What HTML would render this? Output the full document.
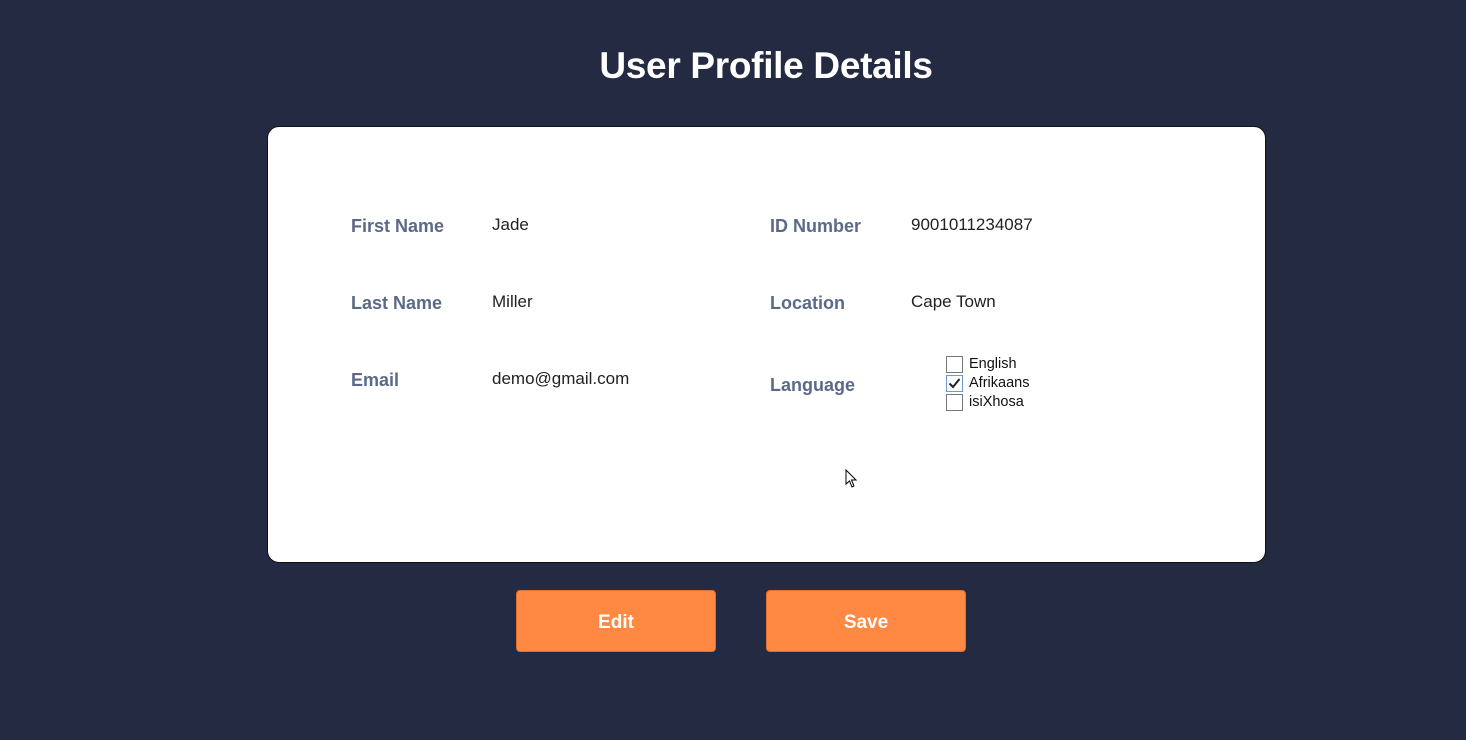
<!DOCTYPE html>
<html><head><style>
*{margin:0;padding:0;box-sizing:border-box}
body{width:1466px;height:740px;background:#242a42;font-family:"Liberation Sans",sans-serif;position:relative;overflow:hidden}
.t{position:absolute;left:66px;width:1400px;top:45px;text-align:center;color:#fff;font-size:37px;font-weight:bold;letter-spacing:-0.3px}
.card{position:absolute;left:267px;top:126px;width:999px;height:437px;background:#fff;border:1px solid #111;border-radius:12px}
.l{position:absolute;color:#5a6a88;font-weight:bold;font-size:18px}
.v{position:absolute;color:#222;font-size:17px}
.cb{position:absolute;left:946px;width:17px;height:17px;border:1px solid #777;background:#fff}
.cl{position:absolute;left:969px;font-size:14.5px;color:#111}
.b{position:absolute;top:590px;width:200px;height:62px;background:#ff8843;border:1px solid #e07030;border-radius:4px;color:#fff;font-weight:bold;font-size:19px;text-align:center;line-height:63px}
</style></head><body>
<div class="t">User Profile Details</div>
<div class="card"></div>
<div class="l" style="left:351px;top:216px">First Name</div>
<div class="v" style="left:492px;top:215px">Jade</div>
<div class="l" style="left:351px;top:293px">Last Name</div>
<div class="v" style="left:492px;top:292px">Miller</div>
<div class="l" style="left:351px;top:370px">Email</div>
<div class="v" style="left:492px;top:369px">demo@gmail.com</div>
<div class="l" style="left:770px;top:216px">ID Number</div>
<div class="v" style="left:911px;top:215px">9001011234087</div>
<div class="l" style="left:770px;top:293px">Location</div>
<div class="v" style="left:911px;top:292px">Cape Town</div>
<div class="l" style="left:770px;top:375px">Language</div>
<div class="cb" style="top:356px"></div><div class="cl" style="top:356px">English</div>
<div class="cb" style="top:375px;border-color:#6a9ad8"><svg width="15" height="15" viewBox="0 0 15 15"><path d="M2.5 7.5 L6 11 L12.5 3" stroke="#222" stroke-width="2" fill="none"/></svg></div><div class="cl" style="top:375px">Afrikaans</div>
<div class="cb" style="top:394px"></div><div class="cl" style="top:394px">isiXhosa</div>
<svg style="position:absolute;left:845px;top:469px" width="14" height="20" viewBox="0 0 14 20"><path d="M1 1 L1 15 L4.5 12 L7 18 L9 17 L6.5 11 L11 11 Z" fill="#fff" stroke="#000" stroke-width="1"/></svg>
<div class="b" style="left:516px">Edit</div>
<div class="b" style="left:766px">Save</div>
</body></html>
